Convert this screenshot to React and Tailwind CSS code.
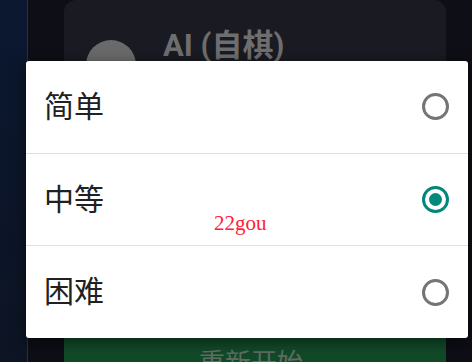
const options = [
  { label: "简单", checked: false },
  { label: "中等", checked: true },
  { label: "困难", checked: false },
];

function Radio({ checked }) {
  return (
    <div
      className={
        "w-[27px] h-[27px] rounded-full border-[3px] flex items-center justify-center " +
        (checked ? "border-[#00897b]" : "border-[#757575]")
      }
    >
      {checked && <div className="w-[13px] h-[13px] rounded-full bg-[#00897b]" />}
    </div>
  );
}

export default function App() {
  return (
    <div
      className="relative w-[472px] h-[362px] overflow-hidden flex bg-[#0d0e16]"
      style={{ fontFamily: 'Roboto, "Noto Sans CJK SC", sans-serif' }}
    >
      {/* side strip */}
      <div className="w-[28px] h-full bg-gradient-to-b from-[#0b1830] to-[#0d1424] border-r border-[#1c3354]" />

      {/* page behind the dialog */}
      <div className="flex-1 flex flex-col pl-[36px] pr-[26px]">
        <div className="h-[338px] shrink-0 bg-[#191a22] rounded-t-[12px] px-[22px] pt-[26px] flex gap-[27px]">
          <div className="w-[50px] h-[50px] mt-[14px] rounded-full bg-[#6a6a6a]" />
          <div className="text-[31px] font-bold text-[#6e6e6e] leading-[40px]">AI (自棋)</div>
        </div>
        <div className="h-[60px] shrink-0 bg-[#124a28] flex justify-center pt-[10px]">
          <span className="text-[26px] text-[#5f6e64] leading-[30px] -ml-[8px]">重新开始</span>
        </div>
      </div>

      {/* dialog */}
      <div className="absolute left-[26px] top-[61px] w-[442px] h-[277px] bg-white rounded-[3px] shadow-[0_4px_16px_rgba(0,0,0,0.5)] flex flex-col">
        {options.map((o, i) => (
          <div
            key={o.label}
            className={
              "flex-1 flex items-center justify-between pl-[18px] pr-[19px] " +
              (i < options.length - 1 ? "border-b border-[#e0e0e0]" : "")
            }
          >
            <span className="text-[30px] text-[#212121] leading-none">{o.label}</span>
            <Radio checked={o.checked} />
          </div>
        ))}
      </div>

      {/* watermark */}
      <div
        className="absolute left-[214px] top-[210px] text-[21px] text-[#ff2233] leading-[26px]"
        style={{ fontFamily: '"Liberation Serif", serif' }}
      >
        22gou
      </div>
    </div>
  );
}
